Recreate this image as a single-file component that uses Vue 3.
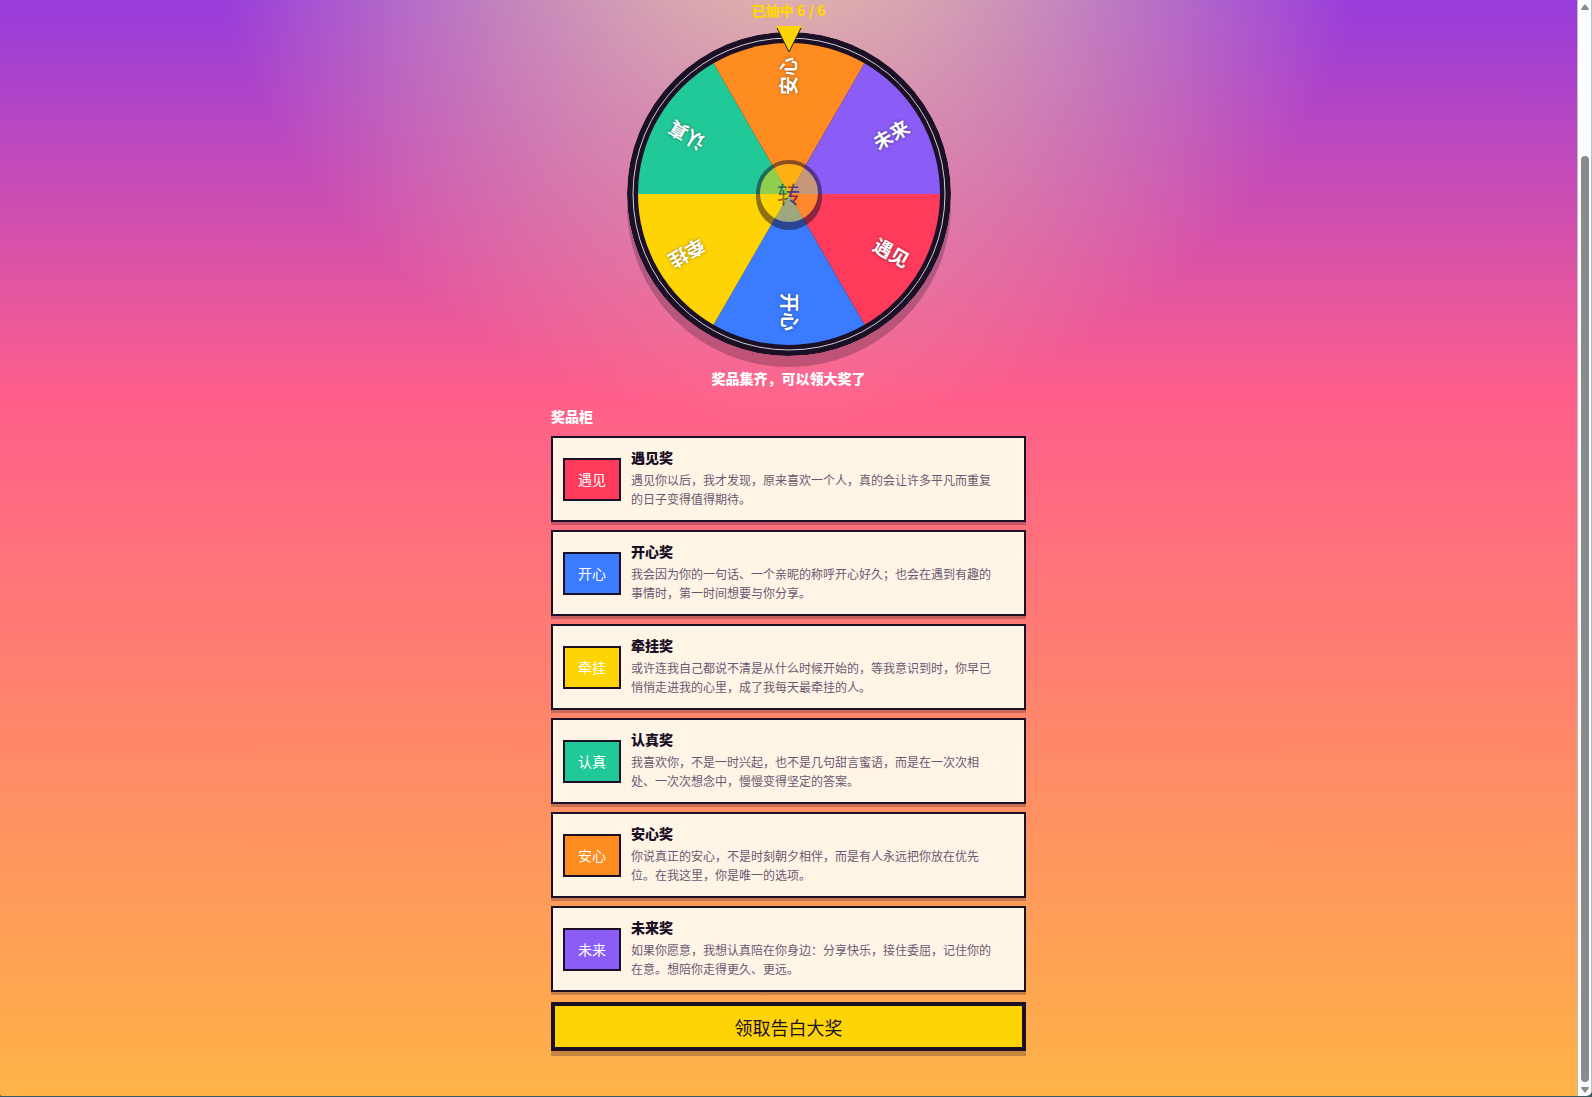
<script setup>
const prizes = [
  { name: '遇见', color: '#ff3b5c', text: '遇见你以后，我才发现，原来喜欢一个人，真的会让许多平凡而重复的日子变得值得期待。' },
  { name: '开心', color: '#3a7bff', text: '我会因为你的一句话、一个亲昵的称呼开心好久；也会在遇到有趣的事情时，第一时间想要与你分享。' },
  { name: '牵挂', color: '#ffd404', text: '或许连我自己都说不清是从什么时候开始的，等我意识到时，你早已悄悄走进我的心里，成了我每天最牵挂的人。' },
  { name: '认真', color: '#22c998', text: '我喜欢你，不是一时兴起，也不是几句甜言蜜语，而是在一次次相处、一次次想念中，慢慢变得坚定的答案。' },
  { name: '安心', color: '#ff8c21', text: '你说真正的安心，不是时刻朝夕相伴，而是有人永远把你放在优先位。在我这里，你是唯一的选项。' },
  { name: '未来', color: '#8b5cf6', text: '如果你愿意，我想认真陪在你身边：分享快乐，接住委屈，记住你的在意。想陪你走得更久、更远。' },
]

const sliceAngle = 360 / prizes.length
const radius = 151

function point(deg) {
  const a = (deg * Math.PI) / 180
  return `${(radius * Math.cos(a)).toFixed(2)} ${(radius * Math.sin(a)).toFixed(2)}`
}

const slices = prizes.map((p, i) => ({
  ...p,
  path: `M0 0L${point(i * sliceAngle)}A${radius} ${radius} 0 0 1 ${point((i + 1) * sliceAngle)}Z`,
  turn: `rotate(${(i + 0.5) * sliceAngle})`,
}))
</script>

<template>
  <div class="window">
    <main class="page">
      <div class="column">
        <p class="progress">已抽中 6 / 6</p>

        <section class="wheel" aria-label="转盘">
          <svg class="disc" viewBox="-162 -162 324 324">
            <circle r="162" fill="#1b1025" />
            <path v-for="s in slices" :key="s.name" :d="s.path" :fill="s.color" />
            <circle r="156" fill="none" stroke="#fff" stroke-opacity="0.8" />
            <text
              v-for="s in slices"
              :key="s.name"
              class="slice-label"
              :transform="s.turn"
              x="118"
              y="7"
              text-anchor="middle"
            >{{ s.name }}</text>
          </svg>
          <svg class="pointer" viewBox="0 0 26 27">
            <path d="M0 0H26L13 27Z" fill="#ffd404" />
            <path d="M1 2L13 26L25 2" fill="none" stroke="#1b1025" />
          </svg>
          <button class="hub" type="button" disabled>转</button>
        </section>

        <p class="status">奖品集齐，可以领大奖了</p>

        <h2 class="heading">奖品柜</h2>
        <ul class="prizes">
          <li v-for="p in prizes" :key="p.name" class="card">
            <span class="badge" :style="{ backgroundColor: p.color }">{{ p.name }}</span>
            <div class="detail">
              <h3>{{ p.name }}奖</h3>
              <p>{{ p.text }}</p>
            </div>
          </li>
        </ul>

        <button class="claim" type="button">领取告白大奖</button>
      </div>
    </main>

    <div class="scrollbar" aria-hidden="true">
      <svg class="arrow" viewBox="0 0 10 8"><path d="M5 1L9 6Q9 7 8 7H2Q1 7 1 6Z" /></svg>
      <div class="thumb"></div>
      <svg class="arrow" viewBox="0 0 10 8"><path d="M5 7L9 2Q9 1 8 1H2Q1 1 1 2Z" /></svg>
    </div>
  </div>
</template>

<style>
body {
  margin: 0;
  background: #3c5a62;
}
</style>

<style scoped>
.window {
  display: flex;
  min-height: calc(100vh - 1px);
  margin-bottom: 1px;
  overflow: hidden;
  border-radius: 0 0 6px 2px;
  font-family: "Noto Sans CJK SC", "Noto Sans", sans-serif;
  color: #1b1025;
}

.page {
  flex: 1;
  display: flex;
  justify-content: center;
  background:
    radial-gradient(circle 597px at 50% -173px, rgba(255, 230, 150, 0.95), rgba(255, 230, 150, 0)),
    linear-gradient(#6a2cff -173px, #ff5f8a 398px, #ffb347 1095px);
}

.column {
  display: flex;
  flex-direction: column;
  width: 475px;
  padding-bottom: 40px;
}

p,
h2,
h3,
ul {
  margin: 0;
  padding: 0;
}

.progress,
.status,
.heading {
  font-size: 14px;
  font-weight: 900;
  line-height: 20px;
}

.progress {
  color: #ffd404;
  text-align: center;
}

.wheel {
  position: relative;
  align-self: center;
  width: 324px;
  height: 324px;
  margin-top: 12px;
}

.disc {
  display: block;
  width: 100%;
  border-radius: 50%;
  box-shadow: 0 11px 0 rgba(27, 16, 37, 0.25);
}

.slice-label {
  fill: #fff;
  font-size: 19px;
  font-weight: 700;
  text-shadow: 0 0 3px rgba(0, 0, 0, 0.5);
}

.pointer {
  position: absolute;
  top: -6px;
  left: calc(50% - 13px);
  width: 26px;
}

.hub {
  position: absolute;
  top: calc(50% - 34px);
  left: calc(50% - 33px);
  box-sizing: border-box;
  width: 66px;
  height: 66px;
  padding: 0;
  border: 4px solid #1b1025;
  border-radius: 50%;
  background: #ffd404;
  box-shadow: 0 4px 0 #1b1025;
  color: #1b1025;
  font-family: inherit;
  font-size: 23px;
  opacity: 0.5;
}

.status {
  margin-top: 12px;
  color: #fff;
  text-align: center;
}

.heading {
  margin-top: 18px;
  color: #fff;
}

.prizes {
  display: flex;
  flex-direction: column;
  gap: 8px;
  margin-top: 10px;
  list-style: none;
}

.card {
  display: flex;
  align-items: center;
  gap: 10px;
  box-sizing: border-box;
  min-height: 86px;
  padding: 4px 24px 4px 10px;
  border: 2px solid #1b1025;
  background: #fff5e6;
  box-shadow: 0 3px 0 rgba(27, 16, 37, 0.25);
}

.badge {
  flex: none;
  box-sizing: border-box;
  width: 58px;
  border: 2px solid #1b1025;
  color: #fff;
  font-size: 14px;
  line-height: 39px;
  text-align: center;
}

.detail {
  padding-bottom: 4px;
}

h3 {
  font-size: 14px;
  font-weight: 900;
  line-height: 20px;
}

.detail p {
  margin-top: 3px;
  color: #6b5870;
  font-size: 12px;
  line-height: 19px;
}

.claim {
  height: 49px;
  margin-top: 10px;
  border: 4px solid #1b1025;
  background: #ffd404;
  box-shadow: 0 5px 0 rgba(27, 16, 37, 0.25);
  color: #1b1025;
  font-family: inherit;
  font-size: 18px;
}

.scrollbar {
  display: flex;
  flex-direction: column;
  align-items: center;
  gap: 4px;
  box-sizing: border-box;
  width: 15px;
  padding: 3px 0 2px;
  border: solid #b8c0c4;
  border-width: 0 1px;
  background: #fcfcfc;
}

.arrow {
  width: 10px;
  height: 8px;
  fill: #8b8b8b;
}

.thumb {
  flex: 1;
  width: 8px;
  margin-top: 141px;
  border-radius: 4px;
  background: #8b8b8b;
}
</style>
